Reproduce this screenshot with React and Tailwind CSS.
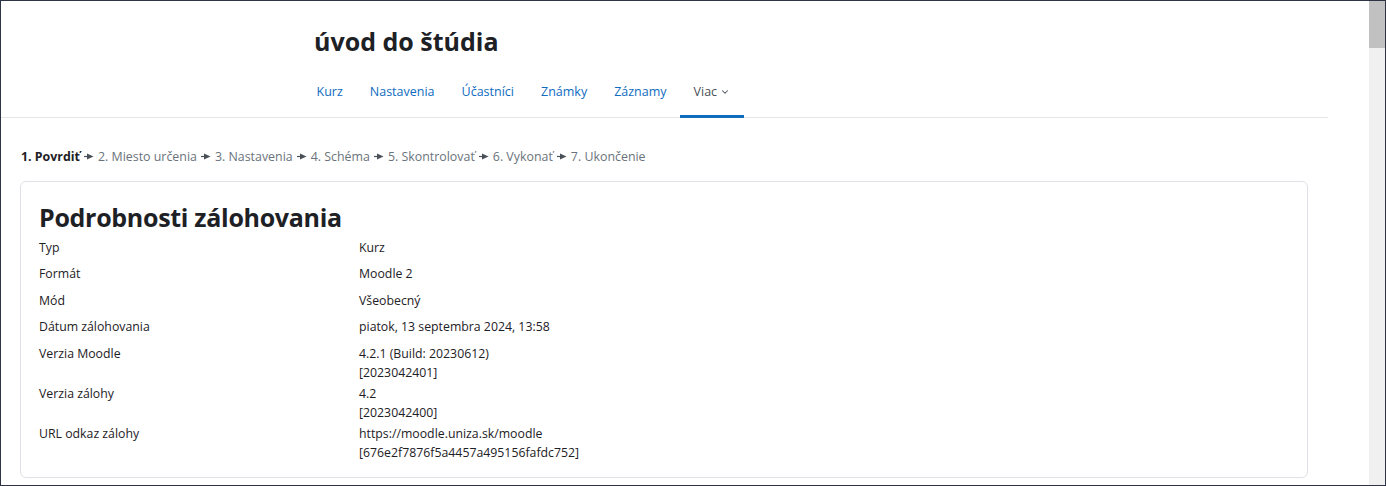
import { ChevronDown } from 'lucide-react';

const tabs = ['Kurz', 'Nastavenia', 'Účastníci', 'Známky', 'Záznamy'];

const steps = ['2. Miesto určenia', '3. Nastavenia', '4. Schéma', '5. Skontrolovať', '6. Vykonať', '7. Ukončenie'];

const rows = [
  { label: 'Typ', value: ['Kurz'] },
  { label: 'Formát', value: ['Moodle 2'] },
  { label: 'Mód', value: ['Všeobecný'] },
  { label: 'Dátum zálohovania', value: ['piatok, 13 septembra 2024, 13:58'] },
  { label: 'Verzia Moodle', value: ['4.2.1 (Build: 20230612)', '[2023042401]'] },
  { label: 'Verzia zálohy', value: ['4.2', '[2023042400]'] },
  { label: 'URL odkaz zálohy', value: ['https://moodle.uniza.sk/moodle', '[676e2f7876f5a4457a495156fafdc752]'] },
];

function StepArrow() {
  return (
    <svg width="10" height="7" viewBox="0 0 10 7" className="mx-[4px] inline-block align-[1px]">
      <path d="M0 3.5h4" stroke="#495057" strokeWidth="1.2" />
      <path d="M3 0.5L9.5 3.5L3 6.5Z" fill="#495057" />
    </svg>
  );
}

export default function App() {
  return (
    <div className="flex h-[486px] w-[1386px] overflow-hidden border border-[#2e3445] bg-white font-['Open_Sans',sans-serif] text-[#1d2125]">
      <div className="flex-1">
        {/* course header */}
        <div className="mr-[41px] border-b border-[#e6e6e6]">
          <h1 className="pl-[313px] pt-[24px] text-[25px] leading-[32px] font-bold">úvod do štúdia</h1>
          <nav className="mt-[22px] flex pl-[302px] text-[12.5px]">
            {tabs.map((tab) => (
              <a key={tab} className="px-[13.5px] pb-[15px] pt-[4px] text-[#0f6cbf]">
                {tab}
              </a>
            ))}
            <a className="-mb-px flex items-center gap-[3px] border-b-[3px] border-[#0f6cbf] px-[13.5px] pb-[13px] pt-[4px] text-[#495057]">
              Viac
              <ChevronDown size={10} strokeWidth={2.5} />
            </a>
          </nav>
        </div>

        {/* backup stages */}
        <div className="pl-[20px] pt-[30px] text-[12.4px] leading-[17px] text-[#6a737b]">
          <span className="font-bold text-[#1d2125]">1. Povrdiť</span>
          {steps.map((step) => (
            <span key={step}>
              <StepArrow />
              {step}
            </span>
          ))}
        </div>

        <div className="ml-[19px] mt-[16px] w-[1288px] rounded-[6px] border border-[#dee2e6] px-[18px] pb-[13px] pt-[17px]">
          <h2 className="text-[25px] leading-[36px] font-bold tracking-[-0.3px]">Podrobnosti zálohovania</h2>
          <div className="mt-[3px] text-[12.3px] leading-[19.5px]">
            {rows.map((row) => (
              <div key={row.label} className={`flex ${row.value.length > 1 ? 'pb-[1px]' : 'pb-[7px]'}`}>
                <div className="w-[320px]">{row.label}</div>
                <div>
                  {row.value.map((line) => (
                    <div key={line}>{line}</div>
                  ))}
                </div>
              </div>
            ))}
          </div>
        </div>
      </div>

      {/* scrollbar */}
      <div className="w-[16px] bg-[#f0f0f0]">
        <div className="h-[47px] bg-[#c1c1c1]" />
      </div>
    </div>
  );
}
